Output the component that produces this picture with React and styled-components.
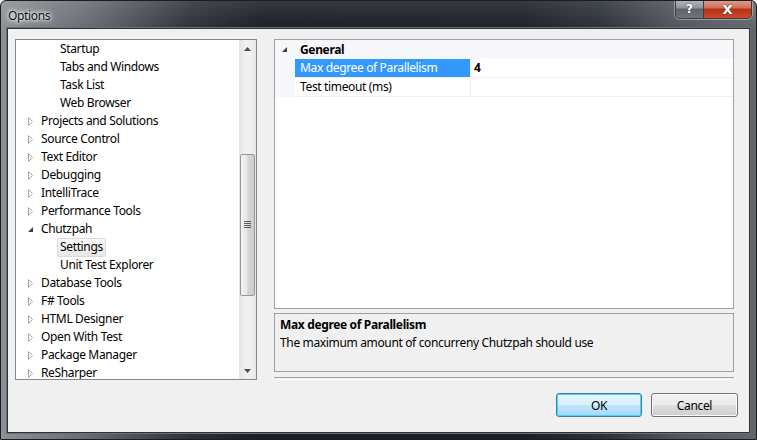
import React from 'react';
import styled, { createGlobalStyle } from 'styled-components';

const GlobalStyle = createGlobalStyle`
  html, body {
    margin: 0;
    padding: 0;
    background: #ffffff;
  }
  body {
    font-family: "Noto Sans", "Open Sans", sans-serif;
    font-size: 12px;
    letter-spacing: -0.35px;
    color: #000;
  }
`;

const Window = styled.div`
  width: 757px;
  height: 440px;
  box-sizing: border-box;
  display: flex;
  flex-direction: column;
  border: 1px solid #1b1d20;
  border-radius: 6px 6px 0 0;
  background:
    linear-gradient(180deg, rgba(255, 255, 255, 0.12) 0px, rgba(255, 255, 255, 0) 30px),
    linear-gradient(90deg, #8d9196 0px, #6a6e74 80px, #2c3138 190px, #1a1e24 260px, #1b1f25 520px, #2b3037 600px, #53575d 680px, #62666c 757px);
  overflow: hidden;
`;

const TitleBar = styled.div`
  height: 27px;
  flex-shrink: 0;
  display: flex;
  align-items: flex-start;
  justify-content: space-between;
`;

const Title = styled.div`
  padding: 6px 0 0 7px;
  font-size: 12px;
  color: #0a0a0a;
  text-shadow: 0 0 6px #ffffff, 0 0 4px #e6e6e6, 0 0 2px #ffffff;
`;

const CaptionButtons = styled.div`
  display: flex;
  margin-right: 4px;
  margin-top: -1px;
  border: 1px solid #3a3d41;
  border-top: none;
  border-radius: 0 0 5px 5px;
  overflow: hidden;
  box-shadow: 0 0 0 1px rgba(255, 255, 255, 0.35);
`;

const CaptionButton = styled.div`
  height: 18px;
  width: ${p => (p.$close ? 47 : 27)}px;
  display: flex;
  align-items: center;
  justify-content: center;
  color: #ffffff;
  font-family: "DejaVu Sans", sans-serif;
  font-weight: bold;
  letter-spacing: 0;
  font-size: ${p => (p.$close ? 13 : 12)}px;
  text-shadow: 0 0 2px #333;
  border-left: ${p => (p.$close ? '1px solid #3a3d41' : 'none')};
  background: ${p =>
    p.$close
      ? 'linear-gradient(180deg, #e0a08e 0%, #cf6f58 45%, #b82f14 50%, #c94a2a 100%)'
      : 'linear-gradient(180deg, #b5b9bf 0%, #8e9399 45%, #5f646b 50%, #6f747b 100%)'};
`;

const Client = styled.div`
  flex: 1;
  margin: 0 6px 6px;
  background: #f0f0f0;
  border: 1px solid #2e3237;
  box-shadow: 0 0 0 1px #6b7077;
  display: flex;
  flex-direction: column;
  padding: 10px 11px 15px 7px;
`;

const Body = styled.div`
  display: flex;
  gap: 17px;
  height: 341px;
`;

const Tree = styled.div`
  width: 242px;
  box-sizing: border-box;
  border: 1px solid #828790;
  background: #ffffff;
  display: flex;
  overflow: hidden;
`;

const TreeList = styled.div`
  flex: 1;
  overflow: hidden;
`;

const TreeRow = styled.div`
  height: 18px;
  display: flex;
  align-items: center;
  padding-left: ${p => (p.$level === 2 ? 41 : 11)}px;
  white-space: nowrap;
`;

const Toggle = styled.span`
  width: 11px;
  display: inline-flex;
  align-items: center;
  flex-shrink: 0;
`;

const Label = styled.span`
  padding: 0 2px 1px 2px;
  line-height: 16px;
  border: 1px solid ${p => (p.$selected ? '#d9d9d9' : 'transparent')};
  border-radius: 2px;
  background: ${p => (p.$selected ? 'linear-gradient(180deg, #fafafa, #e6e6e6)' : 'none')};
`;

const ScrollBar = styled.div`
  width: 17px;
  flex-shrink: 0;
  display: flex;
  flex-direction: column;
  background: linear-gradient(90deg, #e3e3e3, #f0f0f0 40%, #f0f0f0 70%, #e6e6e6);
`;

const ScrollArrow = styled.div`
  height: 17px;
  display: flex;
  align-items: center;
  justify-content: center;
`;

const ScrollTrack = styled.div`
  flex: 1;
  display: flex;
  flex-direction: column;
  padding-top: ${p => p.$offset}px;
`;

const Thumb = styled.div`
  height: 142px;
  margin: 0 1px;
  box-sizing: border-box;
  border: 1px solid #979797;
  border-radius: 2px;
  background: linear-gradient(90deg, #f4f4f4 0%, #e6e6e6 45%, #d4d4d4 55%, #cdcdcd 100%);
  display: flex;
  align-items: center;
  justify-content: center;
`;

const RightColumn = styled.div`
  width: 460px;
  display: flex;
  flex-direction: column;
`;

const Grid = styled.div`
  height: 272px;
  box-sizing: border-box;
  border: 1px solid #a0a0a0;
  background: #ffffff;
  display: flex;
  flex-direction: column;
`;

const CategoryRow = styled.div`
  height: 19px;
  display: flex;
  align-items: center;
  background: #f5f7fb;
  font-weight: bold;
  color: #000;
`;

const CategoryToggle = styled.span`
  width: 25px;
  padding-left: 6px;
  box-sizing: border-box;
  display: inline-flex;
  align-items: center;
`;

const PropRow = styled.div`
  height: 19px;
  display: flex;
  background: #f5f7fb;
`;

const Gutter = styled.div`
  width: 20px;
  flex-shrink: 0;
`;

const PropName = styled.div`
  width: 176px;
  box-sizing: border-box;
  padding-left: 5px;
  line-height: 18px;
  border-bottom: 1px solid #f0f0f0;
  border-right: 1px solid #f0f0f0;
  background: ${p => (p.$selected ? '#3399ff' : '#ffffff')};
  color: ${p => (p.$selected ? '#ffffff' : '#000000')};
`;

const PropValue = styled.div`
  flex: 1;
  padding-left: 3px;
  line-height: 18px;
  border-bottom: 1px solid #f0f0f0;
  background: #ffffff;
  font-weight: ${p => (p.$bold ? 'bold' : 'normal')};
`;

const Description = styled.div`
  margin-top: 4px;
  height: 59px;
  box-sizing: border-box;
  border: 1px solid #a0a0a0;
  background: #f0f0f0;
  padding: 2px 5px;
  line-height: 18px;
`;

const DescTitle = styled.div`
  font-weight: bold;
`;

const Separator = styled.div`
  margin-top: 5px;
  height: 1px;
  border-top: 1px solid #a0a0a0;
  border-bottom: 1px solid #ffffff;
`;

const Footer = styled.div`
  margin-top: 13px;
  display: flex;
  justify-content: flex-end;
  gap: 9px;
`;

const Button = styled.div`
  width: ${p => p.$w}px;
  height: 24px;
  box-sizing: border-box;
  display: flex;
  align-items: center;
  justify-content: center;
  border-radius: 3px;
  border: 1px solid ${p => (p.$default ? '#3c7fb1' : '#707070')};
  box-shadow: inset 0 0 0 1px ${p => (p.$default ? '#48d2fb' : '#fcfcfc')};
  background: ${p =>
    p.$default
      ? 'linear-gradient(180deg, #eaf6fd 0%, #d9f0fc 50%, #bee6fd 51%, #a7d9f5 100%)'
      : 'linear-gradient(180deg, #f2f2f2 0%, #ebebeb 50%, #dddddd 51%, #cfcfcf 100%)'};
`;

const RightArrow = () => (
  <svg width="7" height="9" viewBox="0 0 7 9">
    <path d="M1.5 0.5 L5.5 4.5 L1.5 8.5 Z" fill="#ffffff" stroke="#a6a6a6" strokeWidth="1" />
  </svg>
);

const DownArrow = () => (
  <svg width="7" height="7" viewBox="0 0 7 7">
    <path d="M6 1 L6 6 L1 6 Z" fill="#404040" />
  </svg>
);

const ScrollUp = () => (
  <svg width="7" height="4" viewBox="0 0 7 4">
    <path d="M0 4 L3.5 0 L7 4 Z" fill="#4d4d4d" />
  </svg>
);

const ScrollDown = () => (
  <svg width="7" height="4" viewBox="0 0 7 4">
    <path d="M0 0 L3.5 4 L7 0 Z" fill="#4d4d4d" />
  </svg>
);

const Grip = () => (
  <svg width="7" height="8" viewBox="0 0 7 8">
    {[0, 2, 4, 6].map(y => (
      <rect key={y} x="0" y={y} width="7" height="1" fill="#5c5c5c" />
    ))}
  </svg>
);

const treeItems = [
  { label: 'Startup', level: 2 },
  { label: 'Tabs and Windows', level: 2 },
  { label: 'Task List', level: 2 },
  { label: 'Web Browser', level: 2 },
  { label: 'Projects and Solutions', level: 1 },
  { label: 'Source Control', level: 1 },
  { label: 'Text Editor', level: 1 },
  { label: 'Debugging', level: 1 },
  { label: 'IntelliTrace', level: 1 },
  { label: 'Performance Tools', level: 1 },
  { label: 'Chutzpah', level: 1, open: true },
  { label: 'Settings', level: 2, selected: true },
  { label: 'Unit Test Explorer', level: 2 },
  { label: 'Database Tools', level: 1 },
  { label: 'F# Tools', level: 1 },
  { label: 'HTML Designer', level: 1 },
  { label: 'Open With Test', level: 1 },
  { label: 'Package Manager', level: 1 },
  { label: 'ReSharper', level: 1 },
];

export default function App() {
  return (
    <>
      <GlobalStyle />
      <Window>
        <TitleBar>
          <Title>Options</Title>
          <CaptionButtons>
            <CaptionButton>?</CaptionButton>
            <CaptionButton $close>X</CaptionButton>
          </CaptionButtons>
        </TitleBar>
        <Client>
          <Body>
            <Tree>
              <TreeList>
                {treeItems.map(item => (
                  <TreeRow key={item.label} $level={item.level}>
                    {item.level === 1 && (
                      <Toggle>{item.open ? <DownArrow /> : <RightArrow />}</Toggle>
                    )}
                    <Label $selected={item.selected}>{item.label}</Label>
                  </TreeRow>
                ))}
              </TreeList>
              <ScrollBar>
                <ScrollArrow>
                  <ScrollUp />
                </ScrollArrow>
                <ScrollTrack $offset={97}>
                  <Thumb>
                    <Grip />
                  </Thumb>
                </ScrollTrack>
                <ScrollArrow>
                  <ScrollDown />
                </ScrollArrow>
              </ScrollBar>
            </Tree>
            <RightColumn>
              <Grid>
                <CategoryRow>
                  <CategoryToggle>
                    <DownArrow />
                  </CategoryToggle>
                  General
                </CategoryRow>
                <PropRow>
                  <Gutter />
                  <PropName $selected>Max degree of Parallelism</PropName>
                  <PropValue $bold>4</PropValue>
                </PropRow>
                <PropRow>
                  <Gutter />
                  <PropName>Test timeout (ms)</PropName>
                  <PropValue />
                </PropRow>
              </Grid>
              <Description>
                <DescTitle>Max degree of Parallelism</DescTitle>
                <div>The maximum amount of concurreny Chutzpah should use</div>
              </Description>
              <Separator />
            </RightColumn>
          </Body>
          <Footer>
            <Button $w={86} $default>OK</Button>
            <Button $w={87}>Cancel</Button>
          </Footer>
        </Client>
      </Window>
    </>
  );
}
